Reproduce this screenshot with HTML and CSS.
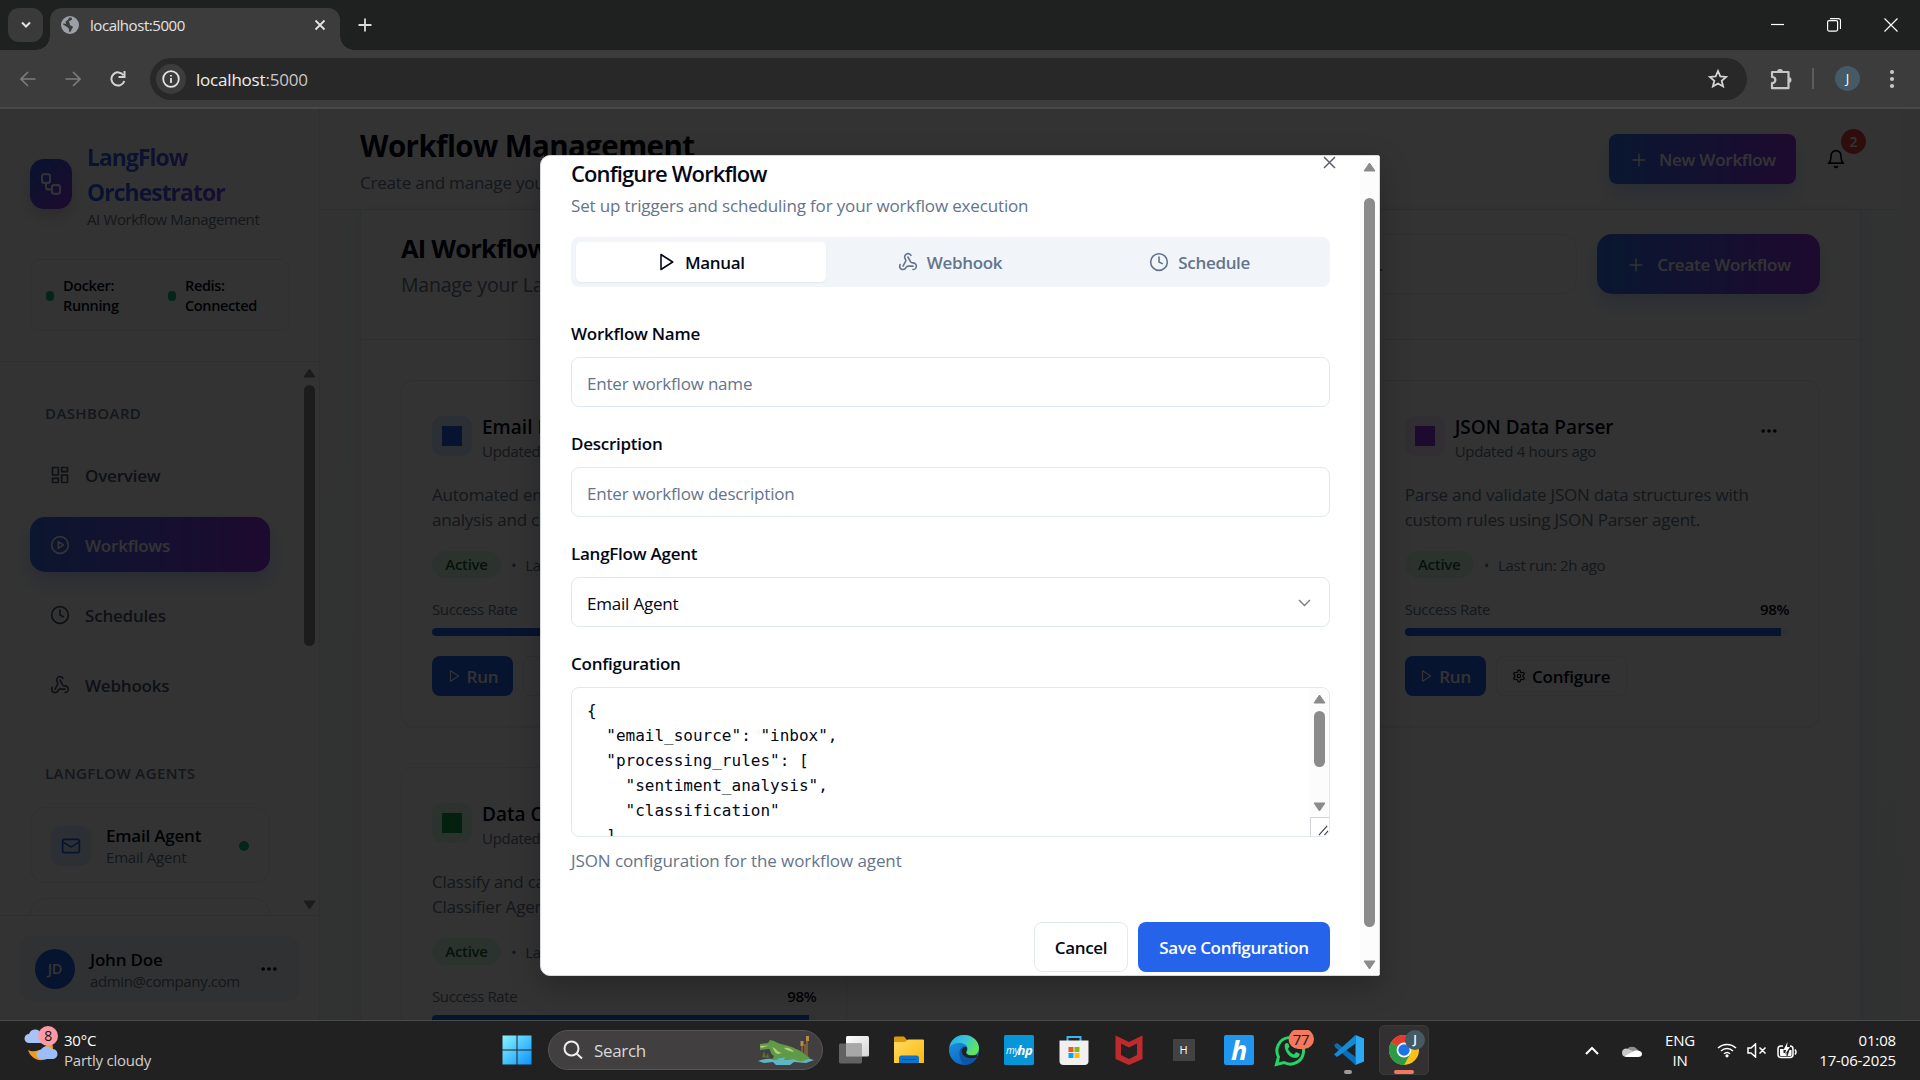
FILE: index.html
```html
<!DOCTYPE html>
<html lang="en">
<head>
<meta charset="utf-8">
<title>localhost:5000</title>
<link rel="stylesheet" href="styles.css">
</head>
<body>
<svg class="sprite" aria-hidden="true">
  <symbol id="i-play" viewBox="0 0 24 24"><polygon points="6 3 20 12 6 21 6 3"/></symbol>
  <symbol id="i-clock" viewBox="0 0 24 24"><circle cx="12" cy="12" r="10"/><polyline points="12 6 12 12 16 14"/></symbol>
  <symbol id="i-hook" viewBox="0 0 24 24"><path d="M18 16.98h-5.99c-1.1 0-1.95.94-2.48 1.9A4 4 0 0 1 2 17c.01-.7.2-1.4.57-2"/><path d="m6 17 3.13-5.78c.53-.97.1-2.18-.5-3.1a4 4 0 1 1 6.89-4.06"/><path d="m12 6 3.13 5.73C15.66 12.7 16.9 13 18 13a4 4 0 0 1 0 8"/></symbol>
  <symbol id="i-plus" viewBox="0 0 24 24"><path d="M5 12h14M12 5v14"/></symbol>
  <symbol id="i-more" viewBox="0 0 24 24"><circle cx="5" cy="12" r="1.2"/><circle cx="12" cy="12" r="1.2"/><circle cx="19" cy="12" r="1.2"/></symbol>
  <symbol id="i-gear" viewBox="0 0 24 24"><path d="M12.22 2h-.44a2 2 0 0 0-2 2v.18a2 2 0 0 1-1 1.73l-.43.25a2 2 0 0 1-2 0l-.15-.08a2 2 0 0 0-2.73.73l-.22.38a2 2 0 0 0 .73 2.73l.15.1a2 2 0 0 1 1 1.72v.51a2 2 0 0 1-1 1.74l-.15.09a2 2 0 0 0-.73 2.73l.22.38a2 2 0 0 0 2.73.73l.15-.08a2 2 0 0 1 2 0l.43.25a2 2 0 0 1 1 1.73V20a2 2 0 0 0 2 2h.44a2 2 0 0 0 2-2v-.18a2 2 0 0 1 1-1.73l.43-.25a2 2 0 0 1 2 0l.15.08a2 2 0 0 0 2.73-.73l.22-.39a2 2 0 0 0-.73-2.73l-.15-.08a2 2 0 0 1-1-1.74v-.5a2 2 0 0 1 1-1.74l.15-.09a2 2 0 0 0 .73-2.73l-.22-.38a2 2 0 0 0-2.73-.73l-.15.08a2 2 0 0 1-2 0l-.43-.25a2 2 0 0 1-1-1.73V4a2 2 0 0 0-2-2z"/><circle cx="12" cy="12" r="3"/></symbol>
  <symbol id="i-up" viewBox="0 0 13 10"><path d="M6.5 1 L12 9 H1 Z"/></symbol>
  <symbol id="i-down" viewBox="0 0 13 10"><path d="M1 1 H12 L6.5 9 Z"/></symbol>
</svg>

<div class="screen">
  <div class="tabstrip">
    <button class="tabsearch"><svg width="10" height="8" viewBox="0 0 10 8"><path d="M1 1.5 5 5.5 9 1.5"/></svg></button>
    <div class="tab">
      <svg class="globe" width="18" height="18" viewBox="0 0 18 18"><circle cx="9" cy="9" r="9" fill="#9aa0a6"/><path d="M8 2c2-1 3 0 3 1 0 2-3 1-3 3 0 1 1 1 1 2-1 2 2 1 3 3 0 1-2 2-2 4-1 2-2 1-2-1 0-2-1-2-2-3S2 9 2 8c1-1 2 0 3 0 0-1-1-2 0-3 1 0 2-1 3-3Z" fill="#3c3c3c"/></svg>
      <span class="tab-title">localhost:5000</span>
      <svg class="tab-x" width="12" height="12" viewBox="0 0 12 12"><path d="M1.5 1.5l9 9M10.500 1.500l-9 9"/></svg>
    </div>
    <svg class="newtab" width="14" height="14" viewBox="0 0 14 14"><path d="M7 .5v13M.5 7h13"/></svg>
    <div class="wincontrols">
      <svg width="13" height="14" viewBox="0 0 13 14"><path d="M0 6.500h13"/></svg>
      <svg width="14" height="14" viewBox="0 0 14 14"><rect x=".6" y="2.600" width="10" height="10.500" rx="1.500"/><path d="M3 .6h8.500a2 2 0 0 1 2 2V11"/></svg>
      <svg width="14" height="14" viewBox="0 0 14 14"><path d="M.5.500l13 13M13.500.500l-13 13"/></svg>
    </div>
  </div>
  <div class="toolbar">
    <svg class="nav-ic dim" width="16" height="16" viewBox="0 0 16 16"><path d="M15.500 8H1M8 1 1 8l7 7"/></svg>
    <svg class="nav-ic dim" width="16" height="16" viewBox="0 0 16 16"><path d="M.5 8H15M8 1l7 7-7 7"/></svg>
    <svg class="nav-ic" width="16" height="16" viewBox="0 0 16 16"><path d="M14.300 10A6.600 6.600 0 1 1 13.500 4.300"/><path d="M14.500 0v6h-6"/></svg>
    <div class="omnibox">
      <span class="info"><svg width="18" height="18" viewBox="0 0 18 18"><circle cx="9" cy="9" r="7.800"/><path d="M9 8v5M9 5v1.600"/></svg></span>
      <span class="url">localhost<em>:5000</em></span>
      <svg class="star" width="20" height="20" viewBox="0 0 20 20"><path d="M10 2l2.300 5.400 5.900.5-4.500 3.900 1.400 5.700L10 14.500l-5.100 3 1.400-5.700-4.500-3.900 5.900-.5z"/></svg>
    </div>
    <svg class="puzzle" width="22" height="22" viewBox="0 0 22 22"><path d="M2 4h16.500v16.200H2v-5c4.500 0 4.500-6.200 0-6.200z"/><path class="fill" d="M7 4a3 3 0 0 1 6 0zM18.500 9a3 3 0 0 1 0 6z"/></svg>
    <span class="tb-sep"></span>
    <span class="profile">J</span>
    <svg class="kebab" width="6" height="20" viewBox="0 0 6 20"><circle cx="3" cy="3" r="2.100"/><circle cx="3" cy="10" r="2.100"/><circle cx="3" cy="17" r="2.100"/></svg>
  </div>

  <div class="page">
    <aside class="sidebar">
      <div class="side-head">
        <div class="brand">
          <span class="logo"><svg width="24" height="26" viewBox="0 0 24 24" preserveAspectRatio="none"><rect x="3" y="3" width="8" height="8" rx="2"/><path d="M7 11v4a2 2 0 0 0 2 2h4"/><rect x="13" y="13" width="8" height="8" rx="2"/></svg></span>
          <div>
            <div class="brand-name">LangFlow<br>Orchestrator</div>
            <div class="brand-sub">AI Workflow Management</div>
          </div>
        </div>
        <div class="status">
          <div class="stat"><i></i><span>Docker:<br>Running</span></div>
          <div class="stat"><i></i><span>Redis:<br>Connected</span></div>
        </div>
      </div>
      <div class="side-body">
        <nav class="nav">
          <div class="nav-label">DASHBOARD</div>
          <a class="nav-item"><svg class="lu" viewBox="0 0 24 24"><rect x="3" y="3" width="7" height="9"/><rect x="14" y="3" width="7" height="5"/><rect x="14" y="12" width="7" height="9"/><rect x="3" y="16" width="7" height="5"/></svg>Overview</a>
          <a class="nav-item active"><svg class="lu" viewBox="0 0 24 24"><circle cx="12" cy="12" r="10"/><polygon points="10 8 16 12 10 16 10 8"/></svg>Workflows</a>
          <a class="nav-item"><svg class="lu"><use href="#i-clock"/></svg>Schedules</a>
          <a class="nav-item"><svg class="lu"><use href="#i-hook"/></svg>Webhooks</a>
          <div class="nav-label second">LANGFLOW AGENTS</div>
          <div class="agent">
            <span class="agent-ic"><svg class="lu" viewBox="0 0 24 24"><rect x="2" y="4" width="20" height="16" rx="2"/><path d="m22 7-8.970 5.700a1.940 1.940 0 0 1-2.060 0L2 7"/></svg></span>
            <div><div class="agent-name">Email Agent</div><div class="agent-sub">Email Agent</div></div>
            <i class="agent-dot"></i>
          </div>
          <div class="agent"></div>
        </nav>
        <div class="vbar side-bar"><svg><use href="#i-up"/></svg><span class="thumb"></span><svg class="dn"><use href="#i-down"/></svg></div>
      </div>
      <div class="side-foot">
        <div class="user">
          <span class="avatar">JD</span>
          <div><div class="user-name">John Doe</div><div class="user-mail">admin@company.com</div></div>
          <svg class="lu more"><use href="#i-more"/></svg>
        </div>
      </div>
    </aside>

    <main class="main">
      <header class="head">
        <div>
          <h1>Workflow Management</h1>
          <p>Create and manage your</p>
        </div>
        <div class="head-right">
          <button class="btn-grad"><svg class="lu"><use href="#i-plus"/></svg><span>New Workflow</span></button>
          <div class="bell">
            <svg class="lu" viewBox="0 0 24 24"><path d="M6 8a6 6 0 0 1 12 0c0 7 3 9 3 9H3s3-2 3-9"/><path d="M10.300 21a1.940 1.940 0 0 0 3.400 0"/></svg>
            <span class="bell-badge">2</span>
          </div>
        </div>
      </header>
      <section class="panel">
        <div class="panel-head">
          <div>
            <h2>AI Workflows</h2>
            <p>Manage your Lang</p>
          </div>
          <div class="panel-tools">
            <div class="search">workflows...</div>
            <button class="btn-grad big"><svg class="lu"><use href="#i-plus"/></svg><span>Create Workflow</span></button>
          </div>
        </div>
        <div class="cards">
          <article class="card">
            <div class="card-head"><span class="sq blue"><i></i></span><div><h3>Email P</h3><p>Updated</p></div></div>
            <p class="desc">Automated em<br>analysis and cl</p>
            <div class="meta"><b>Active</b><i>•</i><span>La</span></div>
            <div class="rate"><span>Success Rate</span></div>
            <div class="bar"><i></i></div>
            <div class="acts"><button class="run"><svg class="lu"><use href="#i-play"/></svg>Run</button><button class="conf"></button></div>
          </article>
          <article class="card third">
            <div class="card-head"><span class="sq purple"><i></i></span><div><h3>JSON Data Parser</h3><p>Updated 4 hours ago</p></div><svg class="lu more"><use href="#i-more"/></svg></div>
            <p class="desc">Parse and validate JSON data structures with<br>custom rules using JSON Parser agent.</p>
            <div class="meta"><b>Active</b><i>•</i><span>Last run: 2h ago</span></div>
            <div class="rate"><span>Success Rate</span><b>98%</b></div>
            <div class="bar"><i></i></div>
            <div class="acts"><button class="run"><svg class="lu"><use href="#i-play"/></svg>Run</button><button class="conf"><svg class="lu"><use href="#i-gear"/></svg>Configure</button></div>
          </article>
          <article class="card">
            <div class="card-head"><span class="sq green"><i></i></span><div><h3>Data Cl</h3><p>Updated</p></div></div>
            <p class="desc">Classify and cat<br>Classifier Agent</p>
            <div class="meta"><b>Active</b><i>•</i><span>La</span></div>
            <div class="rate"><span>Success Rate</span><b>98%</b></div>
            <div class="bar"><i></i></div>
          </article>
        </div>
      </section>
    </main>
    <div class="gutter"></div>
    <div class="backdrop"></div>

    <div class="modal">
      <div class="modal-body">
        <svg class="modal-x" width="13" height="13" viewBox="0 0 13 13"><path d="M1 1l11 11M12 1 1 12"/></svg>
        <h2 class="m-title">Configure Workflow</h2>
        <p class="m-sub">Set up triggers and scheduling for your workflow execution</p>
        <div class="tabs">
          <div class="t on"><svg class="lu"><use href="#i-play"/></svg>Manual</div>
          <div class="t"><svg class="lu"><use href="#i-hook"/></svg>Webhook</div>
          <div class="t"><svg class="lu"><use href="#i-clock"/></svg>Schedule</div>
        </div>
        <div class="field"><label class="l-name">Workflow Name</label><div class="input ph">Enter workflow name</div></div>
        <div class="field"><label>Description</label><div class="input ph">Enter workflow description</div></div>
        <div class="field"><label>LangFlow Agent</label><div class="input select">Email Agent<svg width="13" height="8" viewBox="0 0 13 8"><path d="M1 1l5.500 5.500L12 1"/></svg></div></div>
        <div class="field"><label>Configuration</label>
          <div class="area">
<pre>{
  "email_source": "inbox",
  "processing_rules": [
    "sentiment_analysis",
    "classification"
  ],</pre>
            <div class="vbar area-bar"><svg><use href="#i-up"/></svg><span class="thumb"></span><svg class="dn"><use href="#i-down"/></svg><span class="grip"><svg width="12" height="12" viewBox="0 0 12 12"><path d="M1 11 10 1M7 11l4-4.500"/></svg></span></div>
          </div>
          <p class="hint">JSON configuration for the workflow agent</p>
        </div>
        <div class="m-actions"><button class="cancel">Cancel</button><button class="save">Save Configuration</button></div>
      </div>
      <div class="vbar modal-bar"><svg><use href="#i-up"/></svg><span class="thumb"></span><svg class="dn"><use href="#i-down"/></svg></div>
    </div>
  </div>

  <footer class="taskbar">
    <div class="weather">
      <svg width="36" height="38" viewBox="0 0 36 38">
        <path d="M4 25c6 3 16 1 22-10 6 8 3 19-7 20-8 1-13-4-15-10z" fill="#f09a20"/>
        <path d="M5 18a4.500 4.500 0 0 1 0-9 6.500 6.500 0 0 1 12-1 5 5 0 0 1 1 10z" fill="#a6c4f8"/>
        <path d="M17 34a4.500 4.500 0 0 1 0-9 6.500 6.500 0 0 1 11-1 5 5 0 0 1 1 10z" fill="#9dbdf6"/>
        <circle cx="24" cy="11" r="10" fill="#ff99a4"/>
        <text x="24" y="16" class="wx">8</text>
      </svg>
      <div class="wtext"><span>30°C</span><span class="soft">Partly cloudy</span></div>
    </div>
    <div class="dock">
      <span class="cell"><svg width="30" height="30" viewBox="0 0 30 30"><defs><linearGradient id="wg" x1="0" y1="0" x2="1" y2="1"><stop offset="0" stop-color="#8af3ff"/><stop offset="1" stop-color="#0a93fb"/></linearGradient></defs><path d="M.5.500h14v14H.5zM15.500.500h14v14h-14zM.5 15.500h14v14H.5zM15.500 15.500h14v14h-14z" fill="url(#wg)"/></svg></span>
      <div class="tsearch">
        <svg width="20" height="20" viewBox="0 0 20 20"><circle cx="8.500" cy="8.500" r="7"/><path d="m13.500 13.500 5.500 5"/></svg>
        <span>Search</span>
        <svg class="croc" width="56" height="30" viewBox="0 0 56 30">
          <path d="M0 26q8-3 16-2 14-4 24-1 8-1 16 2l-8 3-12-1-4 3H18l-3-3-9 1z" fill="#5fb5c4"/>
          <path d="M44 20V7M49 21V2M47 20V9" stroke="#8a6a3a" stroke-width="1.500"/><path d="M44 11V6M49.500 6V1" stroke="#b98a48" stroke-width="3"/>
          <path d="M4 22l2-6 2 6 2-4 1 5z" fill="#5d6f35"/>
          <path d="M2 9l8-1 2-3 4 1c6 4 16 4 22 8 6 2 8 5 14 9-6 4-12 4-16 1l-5 1h-5l1-3-6 1-2 2h-5l2-4c-4-2-3-6-5-7l-9 1z" fill="#5f9a48"/>
          <path d="M14 12c4 1 5 5 10 6l-4 1c-4-1-4-5-6-7zM26 13c4-1 8 1 10 4-3-1-7-1-10-4z" fill="#b9cc74"/><path d="M2 11l9-.5-8 2.500z" fill="#cfc27e"/>
        </svg>
      </div>
      <span class="cell"><svg width="30" height="28" viewBox="0 0 30 28"><defs><linearGradient id="tv" x1="0" y1="0" x2="1" y2="1"><stop offset="0" stop-color="#fff"/><stop offset="1" stop-color="#d4d4d4"/></linearGradient></defs><rect x="7" width="23" height="20.500" rx="1.500" fill="url(#tv)"/><rect y="7.500" width="23" height="20" rx="1.500" fill="#6b6b6b" opacity=".88"/><path d="M7 7.500h16v13H7z" fill="#a8a8a8"/></svg></span>
      <span class="cell"><svg width="30" height="28" viewBox="0 0 30 28"><defs><linearGradient id="fg" x1="0" y1="0" x2="1" y2="1"><stop offset="0" stop-color="#ffdc62"/><stop offset="1" stop-color="#fcb80c"/></linearGradient></defs><path d="M0 1.500Q0 .5 1.500.500H10l3 3.500v4H0z" fill="#dd9a0a"/><path d="M0 6h11l3-2.500h15q1 0 1 1V27H0z" fill="url(#fg)"/><path d="M5 27v-5q0-2.500 2.500-2.500h15Q25 19.500 25 22v5z" fill="#0b74d0"/><path d="M8 23.500h14" stroke="#0a4f94"/></svg></span>
      <span class="cell"><svg width="30" height="30" viewBox="0 0 30 30"><defs><linearGradient id="eg" x1="0" y1="0" x2="1" y2=".5"><stop offset="0" stop-color="#28a8ea"/><stop offset=".5" stop-color="#35c4dc"/><stop offset="1" stop-color="#62e45a"/></linearGradient><linearGradient id="eb" x1="0" y1="0" x2=".6" y2="1"><stop offset="0" stop-color="#1d9be0"/><stop offset="1" stop-color="#0b62c0"/></linearGradient></defs><circle cx="15" cy="15" r="15" fill="url(#eb)"/><path d="M.3 13C1.500 5 7.500 0 15 0c9 0 15 6.500 15 13 0 5-3.500 7.500-7 7.500-4 0-6-1.500-6-3 0-1 1.500-1.500 1.500-4 0-3-3-5.500-8-5.500C6 8 2 9.500.3 13z" fill="url(#eg)"/><path d="M10.500 18c0-5 3.500-7 6-6.500 2 .5 2.300 3.500 1 5-1.500 2 2 6 9 4l2 .5C26 27 21 30 15.500 30c-3-2-5-6.500-5-12z" fill="#0c56a8"/><path d="M17.500 12c-4-.5-5 3-4.500 5.500 1 4.500 7 7.500 15.500 4.500C27 19.500 31 19 23 20.500c-4 0-6-1.500-6-3 0-1 1.500-2.500.5-5.500z" fill="#222"/></svg></span>
      <span class="cell"><svg width="30" height="30" viewBox="0 0 30 30"><rect width="30" height="30" rx="1.500" fill="#0696d7"/><text x="2" y="18.500" class="hpm">my</text><text x="13.500" y="20" class="hpb">hp</text></svg></span>
      <span class="cell"><svg width="30" height="30" viewBox="0 0 30 30"><path d="M8.500 6V2h13v4" fill="none" stroke="#3ab6f0" stroke-width="2"/><path d="M.5 5.500h29V26q0 4-4 4h-21q-4 0-4-4z" fill="#f0f0f0"/><path fill="#f35325" d="M9.500 12h5v5h-5z"/><path fill="#81bc06" d="M15.500 12h5v5h-5z"/><path fill="#05a6f0" d="M9.500 18h5v5h-5z"/><path fill="#ffba08" d="M15.500 18h5v5h-5z"/></svg></span>
      <span class="cell"><svg width="28" height="30" viewBox="0 0 28 30"><path d="M.5.500 14 7 27.500.500V24L14 30 .5 24z" fill="#c02a2c"/><path d="M6 8.500 14 12.500l8-4V20l-8 4-8-4z" fill="#222"/></svg></span>
      <span class="cell"><span class="htile">H</span></span>
      <span class="cell"><svg width="30" height="30" viewBox="0 0 30 30"><rect width="30" height="30" rx="2" fill="#2196ef"/><text x="7" y="25" class="hh">h</text></svg></span>
      <span class="cell"><svg width="40" height="40" viewBox="0 0 40 40"><path d="M2.500 34.500l2-7.500A13.300 13.300 0 1 1 10 32.500z" fill="none" stroke="#25d366" stroke-width="3"/><path d="M11 14c1-1.500 3-1.500 3.500 0l1 2.500-1.500 2.500c1.500 3 3.500 4.500 6 5.500l2-2.500 4 2c-1 4-4 4.500-7.500 3.500C14 26 9.500 19 11 14z" fill="#25d366"/><rect x="14.500" y="-1" width="25.500" height="20" rx="10" fill="#f4785e"/><text x="27" y="14.500" class="n77">77</text></svg></span>
      <span class="cell run-dot"><svg width="30" height="30" viewBox="0 0 30 30"><path d="M21.500 30 1.500 12.500 0 10l3-2 18.500 14z" fill="#0a6fb8"/><path d="M21.500 0 0 19.500l3 2.500L21.500 8.500z" fill="#148bd8"/><path d="M21.500 0 30 3.500v23L21.500 30z" fill="#2aaaf5"/></svg></span>
      <span class="cell live"><svg width="30" height="30" viewBox="0 0 30 30"><circle cx="15" cy="15" r="15" fill="#fbc116"/><path d="M15 15 2 7.500A15 15 0 0 1 28 7.500z" fill="#e33b2e"/><path d="M15 15 2 7.500A15 15 0 0 0 15 30l6.500-11.500z" fill="#2c9b46"/><path d="M15 7.500h13L15 15z" fill="#e33b2e"/><circle cx="15" cy="15" r="7.400" fill="#fff"/><circle cx="15" cy="15" r="5.700" fill="#1b73e8"/></svg><b>J</b></span>
    </div>
    <div class="tray">
      <svg class="chev" width="14" height="9" viewBox="0 0 14 9"><path d="M1 8l6-6 6 6"/></svg>
      <svg class="cloud" width="20" height="13" viewBox="0 0 20 13"><path d="M5 5a6 5 0 0 1 10 0l3 3H2z" fill="#8f8f8f"/><path d="M0 8.500A4 4 0 0 1 6 5l9 4-3 4H4Q0 12.500 0 8.500z" fill="#c8c8c8"/><path d="M3 12l10-5.500q7-.5 7 3.500 0 3-4 3H4z" fill="#fff"/></svg>
      <div class="lang"><span>ENG</span><span>IN</span></div>
      <svg class="wifi" width="20" height="16" viewBox="0 0 20 16"><path d="M1 6a13 13 0 0 1 18 0M4 9a8.600 8.600 0 0 1 12 0M7 11.800a4.500 4.500 0 0 1 6 0"/><circle cx="10" cy="13.800" r="1.600"/></svg>
      <svg class="mute" width="20" height="15" viewBox="0 0 20 15"><path d="M1 5h3l4.500-4v13L4 10H1zM12.500 4.500l6 6M18.500 4.500l-6 6"/></svg>
      <svg class="batt" width="20" height="17" viewBox="0 0 20 17"><path d="M6 4H4Q1 4 1 7v5.500q0 3 3 3h9q3 0 3-3V7q0-3-3-3M18 7.500q2 2.500 0 5"/><path class="f" d="M3 7h3.500v4h3v3H4q-1 0-1-1zM10.500 0 6.500 8h2.500l-1 4.500L13 5h-3zM12.500 8h2v5q0 1-1 1h-3z"/></svg>
      <div class="clock"><span>01:08</span><span>17-06-2025</span></div>
    </div>
  </footer>
</div>
</body>
</html>
```
FILE: styles.css
```css
* { box-sizing: border-box; margin: 0; padding: 0; }
html, body { width: 1920px; height: 1080px; overflow: hidden; background: #202020; }
body { font-family: "Open Sans", "Noto Sans", sans-serif; font-size: 17px; letter-spacing: -0.012em; color: #020817; }
button { font: inherit; letter-spacing: inherit; border: 0; }
.sprite { position: absolute; width: 0; height: 0; }
svg { display: block; flex: none; }
.lu { width: 20px; height: 20px; fill: none; stroke: currentColor; stroke-width: 2; stroke-linecap: round; stroke-linejoin: round; }
.screen { width: 1920px; height: 1080px; display: flex; flex-direction: column; }

/* browser chrome */
.tabstrip { height: 50px; flex: none; display: flex; align-items: flex-start; background: #1f2120; }
.tabsearch { margin: 8px 7px 0 8px; width: 35px; height: 34px; border-radius: 11px; background: #3a3a3a; display: flex; align-items: center; justify-content: center; }
.tabsearch svg { fill: none; stroke: #e3e3e3; stroke-width: 2; }
.tab { position: relative; width: 290px; height: 42px; margin-top: 8px; background: #3c3c3c; border-radius: 12px 12px 0 0; display: flex; align-items: center; padding: 0 14px 8px 11px; }
.tab::before, .tab::after { content: ""; position: absolute; bottom: 0; width: 14px; height: 14px; }
.tab::before { left: -14px; background: radial-gradient(circle at 0 0, transparent 13.500px, #3c3c3c 14px); }
.tab::after { right: -14px; background: radial-gradient(circle at 100% 0, transparent 13.500px, #3c3c3c 14px); }
.tab-title { margin-left: 11px; flex: 1; font-size: 15px; color: #e3e3e3; letter-spacing: -0.03em; }
.tab-x { fill: none; stroke: #e3e3e3; stroke-width: 1.800; }
.newtab { margin: 18px 0 0 18px; fill: none; stroke: #dadada; stroke-width: 1.800; }
.wincontrols { margin: 18px 22px 0 auto; display: flex; gap: 43px; fill: none; stroke: #fff; stroke-width: 1.200; }
.toolbar { height: 59px; flex: none; display: flex; align-items: center; background: #3c3c3c; border-bottom: 2px solid #484848; padding: 0 25px 0 20px; }
.nav-ic { margin-right: 29px; fill: none; stroke: #d5d5d5; stroke-width: 2; }
.nav-ic.dim { stroke: #7c7c7c; stroke-width: 1.600; }
.omnibox { margin-left: -5px; width: 1597px; height: 42px; border-radius: 21px; background: #282828; display: flex; align-items: center; padding: 0 19px 0 6px; }
.info { width: 30px; height: 30px; border-radius: 50%; background: #3c3c3c; display: flex; align-items: center; justify-content: center; }
.info svg { fill: none; stroke: #e3e3e3; stroke-width: 1.800; }
.url { margin-left: 10px; padding-top: 1px; flex: 1; font-size: 17px; color: #eee; letter-spacing: -0.012em; }
.url em { font-style: normal; color: #c7c7c7; }
.star { fill: none; stroke: #d5d5d5; stroke-width: 1.800; }
.puzzle { margin-left: 23px; fill: none; stroke: #c7c7c7; stroke-width: 2.200; stroke-linejoin: round; }
.puzzle .fill { fill: #c7c7c7; stroke: none; }
.tb-sep { width: 2px; height: 21px; margin-left: 20px; background: #5c5c5c; }
.profile { margin-left: 21px; width: 25px; height: 25px; border-radius: 50%; background: #455a64; color: #fff; font-size: 13px; line-height: 25px; text-align: center; }
.kebab { margin-left: auto; fill: #c7c7c7; }

/* page */
.page { position: relative; height: 911px; flex: none; display: flex; overflow: hidden; background: #fff; }
.backdrop { position: absolute; inset: 0; background: rgba(0, 0, 0, 0.8); }
.sidebar { width: 320px; flex: none; display: flex; flex-direction: column; border-right: 1px solid #e2e8f0; }
.side-head { height: 253px; flex: none; padding: 30px 30px 0; border-bottom: 1px solid #e2e8f0; }
.brand { display: flex; align-items: center; gap: 15px; height: 90px; }
.logo { width: 42px; height: 50px; border-radius: 14px; background: linear-gradient(135deg, #2563eb, #9333ea); display: flex; align-items: center; justify-content: center; box-shadow: 0 8px 16px rgba(0, 0, 0, 0.15); }
.logo svg { fill: none; stroke: #fff; stroke-width: 2; }
.brand-name { padding-top: 1px; margin-bottom: -1px; font-size: 23px; line-height: 35px; font-weight: 700; width: 201px; letter-spacing: -0.044em; background: linear-gradient(90deg, #2563eb, #9333ea); -webkit-background-clip: text; background-clip: text; color: transparent; }
.brand-sub { font-size: 15px; line-height: 20px; color: #64748b; letter-spacing: -0.025em; }
.status { margin: 30px -1px 0 0; height: 72px; border: 1px solid #e2e8f0; border-radius: 10px; display: grid; grid-template-columns: 122px 1fr; align-items: center; padding-left: 15px; }
.stat { display: flex; align-items: center; gap: 9px; font-size: 14.500px; line-height: 20px; font-weight: 600; letter-spacing: -0.025em; padding-top: 1px; }
.stat i { width: 8px; height: 10px; border-radius: 4px; background: #10b981; }
.side-body { height: 553px; flex: none; overflow: hidden; display: flex; justify-content: space-between; }
.nav { width: 270px; padding: 41px 0 0 30px; }
.nav-label { font-size: 15px; line-height: 20px; margin: 0 0 24px 15px; font-weight: 600; color: #64748b; letter-spacing: 0.027em; white-space: nowrap; }
.nav-label.second { margin-top: 51px; }
.nav-item { display: flex; align-items: center; gap: 15px; height: 55px; margin-bottom: 15px; padding: 1px 0 0 20px; border-radius: 15px; color: #475569; font-weight: 600; }
.nav-item.active { color: #fff; background: linear-gradient(90deg, #3b6fe8, #9333ea); box-shadow: 0 10px 20px rgba(59, 130, 246, 0.3); }
.agent { height: 76px; margin-bottom: 15px; border: 1px solid #e2e8f0; border-radius: 15px; display: flex; align-items: center; padding: 1px 30px 0 20px; }
.agent-ic { width: 40px; height: 40px; border-radius: 10px; background: #dbeafe; color: #2563eb; display: flex; align-items: center; justify-content: center; margin-right: 15px; }
.agent-name { font-weight: 600; line-height: 23px; white-space: nowrap; }
.agent-sub { font-size: 15px; line-height: 20px; color: #64748b; }
.agent-dot { width: 10px; height: 10px; border-radius: 50%; background: #10b981; margin: 0 -10px 0 auto; }
.vbar { display: flex; flex-direction: column; align-items: center; flex: none; background: #fcfcfc; }
.vbar > svg { width: 13px; height: 10px; fill: #8b8b8b; stroke: #8b8b8b; stroke-width: 1; stroke-linejoin: round; }
.vbar .thumb { width: 11px; border-radius: 6px; background: #8b8b8b; }
.vbar .dn { margin-top: auto; }
.side-bar { width: 19px; padding: 6px 0 5px; }
.side-bar .thumb { margin-top: 7px; height: 261px; }
.side-foot { flex: 1; border-top: 1px solid #e2e8f0; padding: 20px; }
.user { height: 65px; border-radius: 10px; background: #eef2f8; display: flex; align-items: center; padding: 1px 20px 0 15px; }
.avatar { width: 40px; height: 40px; border-radius: 50%; background: #2563eb; color: #fff; font-size: 14.500px; font-weight: 600; line-height: 40px; text-align: center; margin-right: 15px; }
.user-name { font-weight: 600; line-height: 23px; }
.user-mail { font-size: 15px; line-height: 20px; color: #64748b; letter-spacing: -0.025em; }
.more { margin-left: auto; }

.main { width: 1581px; flex: none; display: flex; flex-direction: column; background: linear-gradient(135deg, #f8fafc, #f1f8fa); }
.gutter { flex: 1; background: #fbfbfb; }
.head { height: 101px; flex: none; background: #fff; border-bottom: 1px solid #e2e8f0; display: flex; justify-content: space-between; padding: 0 0 0 40px; }
h1 { margin-top: 17px; font-size: 29.500px; line-height: 40px; font-weight: 700; letter-spacing: -0.02em; }
.head p { margin-top: 4px; line-height: 25px; color: #64748b; }
.head-right { display: flex; padding: 25px 41px 0 0; }
.btn-grad { width: 187px; height: 50px; border-radius: 8px; color: #fff; font-weight: 600; display: flex; align-items: center; justify-content: center; gap: 10px; letter-spacing: -0.015em; padding-top: 1px; background: linear-gradient(90deg, #2f74ec, #9333ea); box-shadow: 0 10px 18px rgba(59, 130, 246, 0.25); }
.btn-grad.big { width: 223px; height: 60px; border-radius: 15px; gap: 11px; }
.btn-grad .lu { stroke-width: 1.700; }
.bell { position: relative; width: 64px; padding: 15px 0 0 30px; }
.bell-badge { position: absolute; left: 45px; top: -5px; width: 25px; height: 25px; border-radius: 50%; background: #ef4444; color: #fff; font-size: 14px; font-weight: 600; line-height: 25px; text-align: center; }
.panel { flex: 1; margin: 0 40px; background: #fff; border: solid #e2e8f0; border-width: 0 1px; box-shadow: 0 0 20px rgba(0, 0, 0, 0.05); }
.panel-head { height: 130px; border-bottom: 1px solid #e2e8f0; display: flex; justify-content: space-between; padding: 24px 40px 0; }
h2 { font-size: 25.500px; line-height: 30px; font-weight: 700; letter-spacing: -0.03em; }
.panel-head h2 { margin-top: -1px; }
.panel-head p { font-size: 19.500px; line-height: 28px; margin-top: 8px; color: #64748b; }
.panel-tools { display: flex; gap: 20px; }
.search { width: 390px; height: 60px; border: 1px solid #e2e8f0; border-radius: 15px; padding-right: 193px; text-align: right; line-height: 60px; color: #64748b; }
.cards { display: grid; grid-template-columns: repeat(3, 1fr); grid-auto-rows: 347px; gap: 40px; padding: 40px 40px 0; }
.card { border: 1px solid #e2e8f0; border-radius: 12px; padding: 33px 30px 0; box-shadow: 0 1px 2px rgba(0, 0, 0, 0.05); }
.card.third { grid-column: 3; }
.card-head { display: flex; height: 48px; }
.card-head .more { margin: 7px 10px 0 auto; }
.sq { width: 40px; height: 40px; border-radius: 10px; margin: 2px 10px 0 0; display: flex; align-items: center; justify-content: center; }
.sq i { width: 20px; height: 20px; }
.blue { background: #dbeafe; } .blue i { background: #2563eb; }
.purple { background: #f3e8ff; } .purple i { background: #9333ea; }
.green { background: #dcfce7; } .green i { background: #16a34a; }
h3 { font-size: 19px; line-height: 26px; font-weight: 600; letter-spacing: 0.001em; }
.card-head p { font-size: 15px; line-height: 20px; margin-top: 1px; color: #64748b; letter-spacing: -0.02em; }
.desc { line-height: 25px; margin-top: 20px; color: #64748b; white-space: nowrap; }
.meta { margin-top: 19px; height: 27px; display: flex; align-items: center; font-size: 15px; letter-spacing: -0.02em; color: #64748b; }
.meta b { width: 69px; height: 27px; border-radius: 14px; background: #dcfce7; color: #166534; font-weight: 600; line-height: 27px; text-align: center; }
.meta i { font-style: normal; margin: 0 9px 0 10px; }
.meta i, .meta span { padding-top: 1px; }
.rate { margin-top: 21px; display: flex; justify-content: space-between; line-height: 20px; font-size: 15px; letter-spacing: -0.025em; color: #64748b; }
.rate b { font-weight: 600; color: #020817; }
.bar { margin-top: 9px; height: 8px; border-radius: 4px; background: #f1f5f9; overflow: hidden; }
.bar i { display: block; width: 98%; height: 8px; background: #2563eb; }
.acts { margin-top: 20px; display: flex; gap: 10px; }
.acts button { height: 40px; border-radius: 8px; display: flex; align-items: center; justify-content: center; gap: 6px; font-weight: 600; }
.acts .lu { width: 14px; height: 14px; }
.run { width: 81px; background: #2563eb; color: #fff; }
.conf { width: 131px; background: #fff; border: 1px solid #e2e8f0 !important; color: #020817; }

/* dialog */
.modal { position: absolute; left: 540px; top: 46px; width: 840px; height: 821px; background: #fff; border: 1px solid #d5d9df; border-radius: 10px 2px 2px 10px; display: flex; justify-content: space-between; box-shadow: 0 10px 30px rgba(0, 0, 0, 0.25); }
.modal-body { position: relative; width: 789px; padding-left: 30px; }
.modal-x { position: absolute; left: 782px; top: 0; fill: none; stroke: #5b5f68; stroke-width: 1.500; }
.m-title { margin-top: 4px; font-size: 22px; line-height: 26px; font-weight: 600; letter-spacing: -0.04em; }
.m-sub { margin-top: 7px; line-height: 25px; color: #64748b; letter-spacing: -0.009em; }
.tabs { margin-top: 19px; height: 50px; border-radius: 8px; background: #f1f5f9; display: grid; grid-template-columns: repeat(3, 1fr); padding: 5px; color: #64748b; }
.t { display: flex; align-items: center; justify-content: center; gap: 9px; font-weight: 600; border-radius: 5px; letter-spacing: -0.02em; padding: 1px 1px 0 0; }
.t.on { background: #fff; color: #020817; box-shadow: 0 1px 2px rgba(0, 0, 0, 0.06); }
.tabs .lu { stroke-width: 1.900; margin-top: -1px; }
.field label { display: block; font-weight: 600; line-height: 20px; margin: 27px 0 13px; letter-spacing: -0.015em; }
.field .l-name { margin-top: 37px; }
.input { height: 50px; border: 1px solid #e2e8f0; border-radius: 8px; padding: 2px 18px 0 15px; display: flex; align-items: center; justify-content: space-between; }
.ph { color: #64748b; }
.select svg { fill: none; stroke: #777b85; stroke-width: 1.400; }
.area { height: 150px; border: 1px solid #e2e8f0; border-radius: 8px; overflow: hidden; display: flex; justify-content: space-between; }
.area pre { height: 148px; overflow: hidden; padding: 10px 0 0 15px; font: 16px/25px "DejaVu Sans Mono", "Liberation Mono", monospace; letter-spacing: 0; }
.area-bar { width: 19px; padding-top: 6px; }
.area-bar .thumb { margin-top: 7px; height: 56px; }
.grip { width: 19px; height: 19px; margin-top: 5px; border: solid #d0d3d8; border-width: 1px 0 0 1px; display: flex; align-items: flex-end; justify-content: flex-end; background: #fff; }
.grip svg { width: 11px; height: 11px; fill: none; stroke: #444; stroke-width: 1.300; }
.hint { margin-top: 11px; line-height: 25px; color: #64748b; letter-spacing: -0.005em; }
.m-actions { margin-top: 49px; display: flex; justify-content: flex-end; gap: 10px; }
.m-actions button { height: 50px; border-radius: 8px; font-weight: 600; letter-spacing: -0.02em; padding-top: 1px; }
.cancel { width: 94px; background: #fff; color: #020817; border: 1px solid #e2e8f0 !important; }
.save { width: 192px; background: #2563eb; color: #fff; }
.modal-bar { width: 19px; padding: 6px 0 5px; }
.modal-bar .thumb { margin-top: 26px; height: 729px; }

/* taskbar */
.taskbar { height: 60px; flex: none; display: flex; align-items: center; background: #222121; border-top: 1px solid #4a4a4a; color: #fff; letter-spacing: -0.02em; padding-bottom: 1px; }
.weather { width: 489px; display: flex; padding-left: 24px; gap: 4px; font-size: 15px; }
.weather svg { margin-top: -6px; }
.wtext { display: flex; flex-direction: column; line-height: 20px; letter-spacing: -0.015em; margin-top: -1px; }
.soft { color: #cfcfcf; }
.wx { font-size: 14px; fill: #111; text-anchor: middle; }
.dock { display: flex; align-items: center; }
.cell { width: 55px; height: 50px; display: flex; align-items: center; justify-content: center; position: relative; }
.tsearch { width: 275px; height: 40px; margin: 0 3px 0 4px; border-radius: 20px; background: #413f40; border: 1px solid #565455; display: flex; align-items: center; padding: 0 8px 0 14px; font-size: 17px; color: #d8d8d8; }
.tsearch svg:first-child { fill: none; stroke: #eee; stroke-width: 2; margin-right: 11px; }
.croc { margin-left: auto; }
.hpm { font: italic 10px "Open Sans", sans-serif; fill: #fff; }
.hpb { font: italic 700 13px "Open Sans", sans-serif; fill: #fff; }
.htile { width: 22px; height: 22px; background: #424242; font-size: 11px; line-height: 22px; text-align: center; }
.hh { font: italic 700 27px "Open Sans", sans-serif; fill: #fff; }
.n77 { font-size: 15px; fill: #1a1a1a; text-anchor: middle; }
.run-dot::after { content: ""; position: absolute; left: 23px; bottom: 1px; width: 8px; height: 4px; border-radius: 2px; background: #9a9a9a; }
.live { width: 50px; margin-left: 3px; border-radius: 5px; background: #323031; border: 1px solid #3c3a3b; }
.live::after { content: ""; position: absolute; left: 14px; bottom: 0; width: 20px; height: 4px; border-radius: 2px; background: #f4785e; }
.live b { position: absolute; left: 25px; top: 4px; width: 20px; height: 20px; border-radius: 50%; background: #455a64; font-size: 12px; font-weight: 600; line-height: 20px; text-align: center; }
.tray { flex: 1; display: flex; align-items: center; padding-right: 24px; justify-content: flex-end; font-size: 15px; line-height: 20px; fill: none; stroke-width: 1.500; letter-spacing: -0.01em; }
.tray svg { stroke: #fff; }
.tray .cloud { stroke: none; margin: 0 23px 0 23px; }
.chev { stroke-width: 2; }
.lang { display: flex; flex-direction: column; align-items: center; width: 30px; margin-right: 22px; }
.wifi circle, .batt .f { fill: #fff; stroke: none; }
.mute { margin: 0 10px; }
.clock { width: 99px; display: flex; flex-direction: column; align-items: flex-end; }
```
